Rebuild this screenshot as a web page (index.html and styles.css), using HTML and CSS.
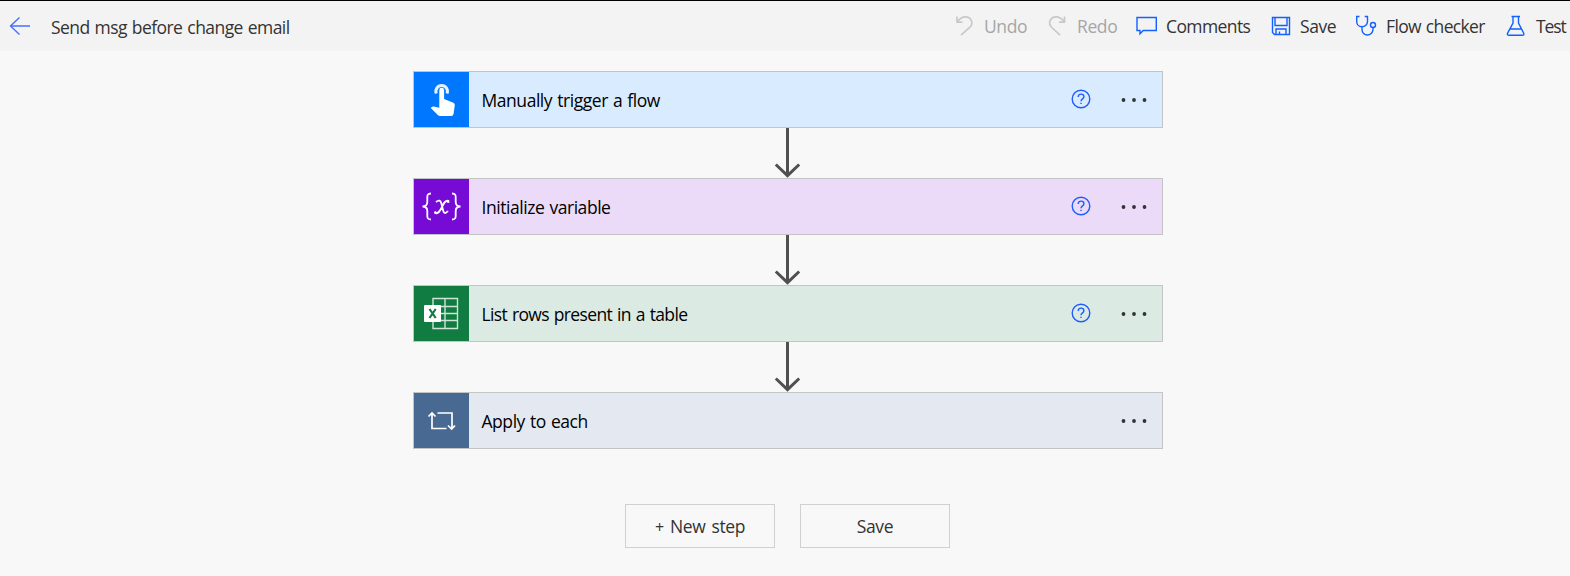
FILE: index.html
```
<!DOCTYPE html>
<html lang="en">
<head>
<meta charset="utf-8">
<title>Send msg before change email</title>
<link rel="stylesheet" href="styles.css">
</head>
<body>
<header class="topbar">
  <svg class="back" width="22" height="20" viewBox="0 0 22 20"><path d="M10.500 1.500 1.500 10l9 8.500M1.500 10H21"/></svg>
  <h1 class="title">Send msg before change email</h1>
  <nav class="commands">
    <div class="cmd cmd-undo off"><svg width="22" height="22" viewBox="0 0 22 22"><path d="M3 1.500V7.200H8.500M3 7.200C5 4.300 8 1.900 11.500 1.900C17 1.900 19.800 8 16.200 12L7 20.200"/></svg><span>Undo</span></div>
    <div class="cmd cmd-redo off"><svg width="22" height="22" viewBox="0 0 22 22"><path d="M17.500 1.500V7.200H12M17.500 7.200C15.500 4.300 12.500 1.900 9 1.900C3.500 1.900 .700 8 4.300 12L13 20.200"/></svg><span>Redo</span></div>
    <div class="cmd cmd-comments"><svg width="22" height="22" viewBox="0 0 22 22"><path d="M1 2.500H20.300V15.500H7.200L4 18.800V15.500H1Z"/></svg><span>Comments</span></div>
    <div class="cmd cmd-save"><svg width="22" height="22" viewBox="0 0 22 22"><path d="M2.500 2.500H19.500V19.500H4.500L2.500 17.500ZM5 2.500V10.500H17V2.500M6 19.500V14H16V19.500M9.500 19V16.500"/></svg><span>Save</span></div>
    <div class="cmd cmd-checker"><svg width="22" height="22" viewBox="0 0 22 22"><path d="M3.500 1.500H.700V6.500C.700 9.500 3 11.700 6 11.700S11.500 9.500 11.500 6.500V1.500H8.700M6 11.700V14.500C6 17.700 8.500 20 11.300 20S17 17.700 17 14.500V12.500"/><circle cx="17" cy="10" r="2.500"/></svg><span>Flow checker</span></div>
    <div class="cmd cmd-test"><svg width="22" height="22" viewBox="0 0 22 22"><path d="M5.500 1.500H14M7 1.500V8L1.500 18.300Q.900 20.300 3 20.300H16.300Q18.400 20.300 17.700 18.300L12.500 8V1.500M4.300 14H15.300"/></svg><span>Test</span></div>
  </nav>
</header>
<main class="flow">
  <section class="card trigger">
    <div class="tile"><svg width="55" height="55" viewBox="0 0 55 55"><path class="ring" d="M22.300 21.500A5.800 5.800 0 1 1 33 21.500"/><path class="solid" d="M25.300 18.200a2.400 2.400 0 0 1 4.800 0V27l9.300 3.700q1.500.800 1.400 2.500l-1.200 8.500q-.300 2.300-2.600 2.300H26.300q-1.500 0-2.500-1L16.800 36l1-1.100q.800-.700 2-.4l5.500 1.200Z"/></svg></div>
    <span class="name">Manually trigger a flow</span>
    <svg class="help" width="20" height="20" viewBox="0 0 20 20"><circle cx="10" cy="10" r="8.800"/><path d="M7.200 8C7.200 4 12.900 4.300 12.900 7.700C12.900 9.900 10 9.900 10 12.300M10 13.800V15.100"/></svg>
    <svg class="more" width="28" height="6" viewBox="0 0 28 6"><circle cx="3.500" cy="3" r="1.900"/><circle cx="14" cy="3" r="1.900"/><circle cx="24.500" cy="3" r="1.900"/></svg>
  </section>
  <svg class="arrow" width="28" height="50" viewBox="0 0 28 50"><path d="M13.500 0V47.500M1.800 36.500 13.500 47.700 25.200 36.500"/></svg>
  <section class="card variable">
    <div class="tile"><svg width="55" height="55" viewBox="0 0 55 55"><path class="brace" d="M17 14.500C12.800 14.500 13.300 17 13.300 20V23C13.300 26 11.800 27.500 8.500 27.500C11.800 27.500 13.300 29 13.300 32V35C13.300 38 12.800 40.500 17 40.500M38 14.500C42.200 14.500 41.700 17 41.700 20V23C41.700 26 43.200 27.500 46.500 27.500C43.200 27.500 41.700 29 41.700 32V35C41.700 38 42.200 40.500 38 40.500"/><path class="brace" d="M22 23C25 20.500 26.600 21.500 27.200 24L29.300 32C30 34.700 31.500 35 34 32M35 22C31.500 20.500 29.800 24 28.200 27.500C26.500 31 24.500 35.500 21 34"/><circle class="solid" cx="34.200" cy="22.700" r="1.300"/><circle class="solid" cx="21.300" cy="33.500" r="1.300"/></svg></div>
    <span class="name">Initialize variable</span>
    <svg class="help" width="20" height="20" viewBox="0 0 20 20"><circle cx="10" cy="10" r="8.800"/><path d="M7.200 8C7.200 4 12.900 4.300 12.900 7.700C12.900 9.900 10 9.900 10 12.300M10 13.800V15.100"/></svg>
    <svg class="more" width="28" height="6" viewBox="0 0 28 6"><circle cx="3.500" cy="3" r="1.900"/><circle cx="14" cy="3" r="1.900"/><circle cx="24.500" cy="3" r="1.900"/></svg>
  </section>
  <svg class="arrow" width="28" height="50" viewBox="0 0 28 50"><path d="M13.500 0V47.500M1.800 36.500 13.500 47.700 25.200 36.500"/></svg>
  <section class="card excel">
    <div class="tile"><svg width="55" height="55" viewBox="0 0 55 55"><path class="sheet" d="M19 12.500H43.500V42.500H19ZM31 12.500V42.500M19 20.500H43.500M19 27.500H43.500M19 34.500H43.500"/><rect class="solid" x="10" y="19" width="17" height="17" rx="1"/><path class="mark" d="M15.500 23 21.700 32M21.700 23 15.500 32"/></svg></div>
    <span class="name">List rows present in a table</span>
    <svg class="help" width="20" height="20" viewBox="0 0 20 20"><circle cx="10" cy="10" r="8.800"/><path d="M7.200 8C7.200 4 12.900 4.300 12.900 7.700C12.900 9.900 10 9.900 10 12.300M10 13.800V15.100"/></svg>
    <svg class="more" width="28" height="6" viewBox="0 0 28 6"><circle cx="3.500" cy="3" r="1.900"/><circle cx="14" cy="3" r="1.900"/><circle cx="24.500" cy="3" r="1.900"/></svg>
  </section>
  <svg class="arrow" width="28" height="50" viewBox="0 0 28 50"><path d="M13.500 0V47.500M1.800 36.500 13.500 47.700 25.200 36.500"/></svg>
  <section class="card loop">
    <div class="tile"><svg width="55" height="55" viewBox="0 0 55 55"><path class="cycle" d="M32.500 35.500H18V20M14.500 23.500 18 20 21.500 23.500M23.500 20H38V35.500M34 32.500 37.700 36 41 32.500"/></svg></div>
    <span class="name">Apply to each</span>
    <svg class="more" width="28" height="6" viewBox="0 0 28 6"><circle cx="3.500" cy="3" r="1.900"/><circle cx="14" cy="3" r="1.900"/><circle cx="24.500" cy="3" r="1.900"/></svg>
  </section>
  <div class="actions">
    <button class="btn" type="button"><span class="plus">+</span> New step</button>
    <button class="btn" type="button">Save</button>
  </div>
</main>
</body>
</html>
```
FILE: styles.css
```
* { box-sizing: border-box; }
body {
  margin: 0;
  height: 576px;
  overflow: hidden;
  background: #f8f8f8;
  color: #333;
  font: 17.5px/24px "Open Sans", "Noto Sans", sans-serif;
  word-spacing: 1px;
}
svg { display: block; flex: none; fill: none; }
.topbar {
  display: flex;
  align-items: center;
  height: 51px;
  padding-left: 9px;
  border-top: 1px solid #000;
  background: #f3f3f3;
  white-space: nowrap;
}
.back { stroke: #4a70ff; stroke-width: 1.4; }
.title { margin: 2px 0 0 20px; font: inherit; letter-spacing: -0.57px; }
.commands { display: flex; margin-left: auto; }
.cmd { display: flex; align-items: center; gap: 8px; flex: none; letter-spacing: -0.4px; }
.cmd svg { stroke: #1160ff; stroke-width: 1.4; }
.off { color: #a6a6a6; }
.off svg { stroke: #c8c8c8; stroke-width: 1.7; }
.cmd-undo { width: 93px; }
.cmd-redo { width: 89px; }
.cmd-comments { width: 134px; letter-spacing: -0.6px; }
.cmd-save { width: 86px; }
.cmd-checker { width: 150px; letter-spacing: -0.65px; }
.cmd-test { width: 64px; letter-spacing: -1.1px; }
.flow { display: flex; flex-direction: column; align-items: center; padding: 20px 0 0 5px; }
.card {
  display: flex;
  align-items: center;
  width: 750px;
  height: 57px;
  padding-right: 14px;
  border: 1px solid #c4c4c4;
  color: #000;
}
.tile { width: 55px; height: 55px; margin-right: 13px; }
.name { margin-top: 1px; margin-right: auto; letter-spacing: -0.45px; }
.trigger { background: #d9ebff; }
.trigger .tile { background: #0077ff; }
.variable { background: #ebdbf8; }
.variable .tile { background: #770bd6; }
.excel { background: #dbebe3; }
.excel .tile { background: #107c41; }
.excel .name { letter-spacing: -0.65px; }
.loop { background: #e4e9f1; }
.loop .tile { background: #486991; }
.ring { stroke: #e5f1ff; stroke-width: 3; }
.solid { fill: #fff; }
.brace { stroke: #fff; stroke-width: 1.8; }
.sheet { stroke: #cce5d8; stroke-width: 1.4; }
.mark { stroke: #107c41; stroke-width: 2.2; }
.cycle { stroke: #fff; stroke-width: 1.7; }
.help { margin: 0 29px 1px 0; stroke: #1f5cff; stroke-width: 1.4; }
.more { fill: #333; }
.arrow { stroke: #505050; stroke-width: 3; }
.actions { display: flex; gap: 25px; margin-top: 55px; }
.btn {
  width: 150px;
  height: 44px;
  padding: 0;
  border: 1px solid #d0d0d0;
  background: #f8f8f8;
  color: #333;
  font: inherit;
  letter-spacing: -0.4px;
  word-spacing: 2px;
}
.plus { font-size: 16px; }
```
